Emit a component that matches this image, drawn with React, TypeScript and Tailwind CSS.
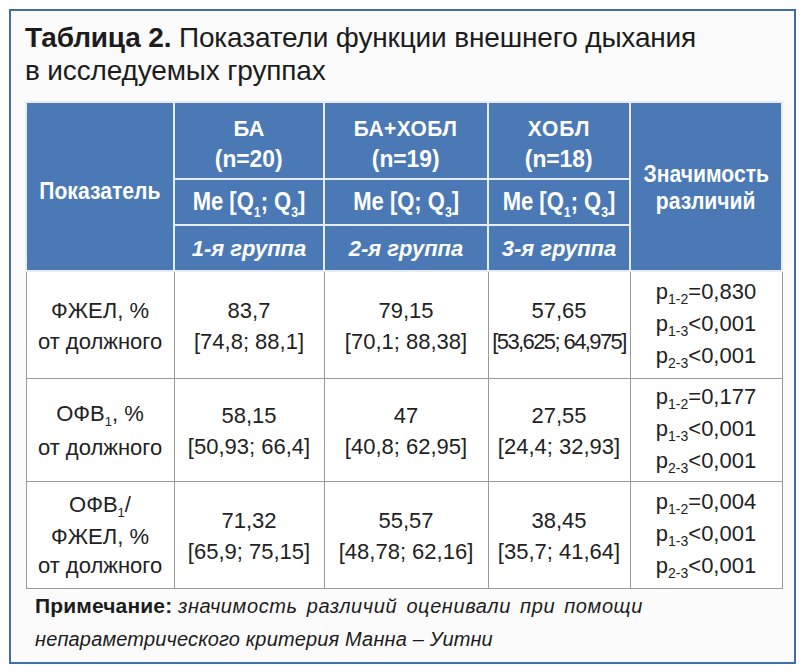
import React from "react";

const hdr = "font-['Liberation_Sans',Arial,sans-serif] font-bold text-white bg-[#4a79b6] border-2 border-[#e6edf6] p-0";

function Sub({ children }: { children: React.ReactNode }) {
  return <span className="text-[14px] relative top-[7px] leading-none">{children}</span>;
}

function Sq({ children, s = "scale-x-[0.88]" }: { children: React.ReactNode; s?: string }) {
  return <span className={`inline-block whitespace-nowrap ${s}`}>{children}</span>;
}

function PLine({ sub, rest }: { sub: string; rest: string }) {
  return (
    <div className="leading-[30px]">
      p<span className="text-[14px] relative top-[5px]">{sub}</span>
      {rest}
    </div>
  );
}

function PCell({ first }: { first: string }) {
  return (
    <td className="border border-[#9a9a9a] bg-white text-center align-middle">
      <div className="inline-block text-left">
        <PLine sub="1-2" rest={first} />
        <PLine sub="1-3" rest="<0,001" />
        <PLine sub="2-3" rest="<0,001" />
      </div>
    </td>
  );
}

function Val({ a, b, tight }: { a: string; b: string; tight?: boolean }) {
  return (
    <td className="border border-[#9a9a9a] bg-white text-center align-middle leading-[31px] whitespace-nowrap">
      <div className="pt-[2px]">{a}</div>
      <div className={tight ? "tracking-[-1.6px]" : ""}>{b}</div>
    </td>
  );
}

export default function App() {
  return (
    <div className="w-[802px] h-[672px] bg-white pt-[9px] pl-[9px]">
      <div className="w-[787px] h-[655px] border-2 border-[#3f6fa8] bg-[#fbfbfb] pt-[10px] px-[14px] font-['Liberation_Sans',Arial,sans-serif] text-[#1c1c1c]">
        <div className="text-[28px] leading-[33px] tracking-[-0.15px]">
          <span className="font-bold">Таблица 2.</span> Показатели функции внешнего дыхания
          <br />в исследуемых группах
        </div>
        <table className="mt-[14px] border-collapse table-fixed w-[756px] text-[22px]">
          <colgroup>
            <col className="w-[148px]" />
            <col className="w-[150px]" />
            <col className="w-[164px]" />
            <col className="w-[142px]" />
            <col className="w-[152px]" />
          </colgroup>
          <thead>
            <tr className="h-[77px]">
              <th rowSpan={3} className={`${hdr} text-[24px] pt-[9px]`}>
                <Sq>Показатель</Sq>
              </th>
              <th className={`${hdr} pt-[8px]`}>
                <div className="text-[22px] leading-[28px]">БА</div>
                <div className="text-[24px] leading-[32px]"><Sq s="scale-x-[0.95]">(n=20)</Sq></div>
              </th>
              <th className={`${hdr} pt-[8px]`}>
                <div className="text-[22px] leading-[28px]"><Sq s="scale-x-[0.95]"><span className="tracking-[0.5px]">БА+ХОБЛ</span></Sq></div>
                <div className="text-[24px] leading-[32px]"><Sq s="scale-x-[0.95]">(n=19)</Sq></div>
              </th>
              <th className={`${hdr} pt-[8px]`}>
                <div className="text-[22px] leading-[28px]"><Sq s="scale-x-[0.95]"><span className="tracking-[1px]">ХОБЛ</span></Sq></div>
                <div className="text-[24px] leading-[32px]"><Sq s="scale-x-[0.95]">(n=18)</Sq></div>
              </th>
              <th rowSpan={3} className={`${hdr} text-[24px] leading-[27px] pt-0`}>
                <Sq>Значимость</Sq>
                <br />
                <Sq>различий</Sq>
              </th>
            </tr>
            <tr className="h-[46px]">
              <th className={`${hdr} text-[25px]`}>
                <Sq>Me [Q<Sub>1</Sub>; Q<Sub>3</Sub>]</Sq>
              </th>
              <th className={`${hdr} text-[25px]`}>
                <Sq>Me [Q; Q<Sub>3</Sub>]</Sq>
              </th>
              <th className={`${hdr} text-[25px]`}>
                <Sq>Me [Q<Sub>1</Sub>; Q<Sub>3</Sub>]</Sq>
              </th>
            </tr>
            <tr className="h-[46px]">
              <th className={`${hdr} italic text-[22px]`}>1-я группа</th>
              <th className={`${hdr} italic text-[22px]`}>2-я группа</th>
              <th className={`${hdr} italic text-[22px]`}>3-я группа</th>
            </tr>
          </thead>
          <tbody className="text-[#222]">
            <tr className="h-[107px]">
              <td className="border border-[#9a9a9a] bg-white text-center align-middle leading-[31px]">
                <div className="pt-[2px]">ФЖЕЛ, %</div>
                <div>от должного</div>
              </td>
              <Val a="83,7" b="[74,8; 88,1]" />
              <Val a="79,15" b="[70,1; 88,38]" />
              <Val a="57,65" b="[53,625; 64,975]" tight />
              <PCell first="=0,830" />
            </tr>
            <tr className="h-[103px]">
              <td className="border border-[#9a9a9a] bg-white text-center align-middle leading-[31px]">
                <div className="pt-[2px]">
                  ОФВ<span className="text-[13px] relative top-[5px]">1</span>, %
                </div>
                <div>от должного</div>
              </td>
              <Val a="58,15" b="[50,93; 66,4]" />
              <Val a="47" b="[40,8; 62,95]" />
              <Val a="27,55" b="[24,4; 32,93]" />
              <PCell first="=0,177" />
            </tr>
            <tr className="h-[107px]">
              <td className="border border-[#9a9a9a] bg-white text-center align-middle leading-[29px]">
                <div>
                  ОФВ<span className="text-[13px] relative top-[5px]">1</span>/
                </div>
                <div>ФЖЕЛ, %</div>
                <div>от должного</div>
              </td>
              <Val a="71,32" b="[65,9; 75,15]" />
              <Val a="55,57" b="[48,78; 62,16]" />
              <Val a="38,45" b="[35,7; 41,64]" />
              <PCell first="=0,004" />
            </tr>
          </tbody>
        </table>
        <div className="pl-[10px] text-[20px] leading-[33px] tracking-[0.15px] text-[#1c1c1c]">
          <span className="font-bold text-[21px]">Примечание:</span>{" "}
          <span className="italic tracking-[0.6px] [word-spacing:3px]">значимость различий оценивали при помощи</span>
          <br />
          <span className="italic">непараметрического критерия Манна – Уитни</span>
        </div>
      </div>
    </div>
  );
}
